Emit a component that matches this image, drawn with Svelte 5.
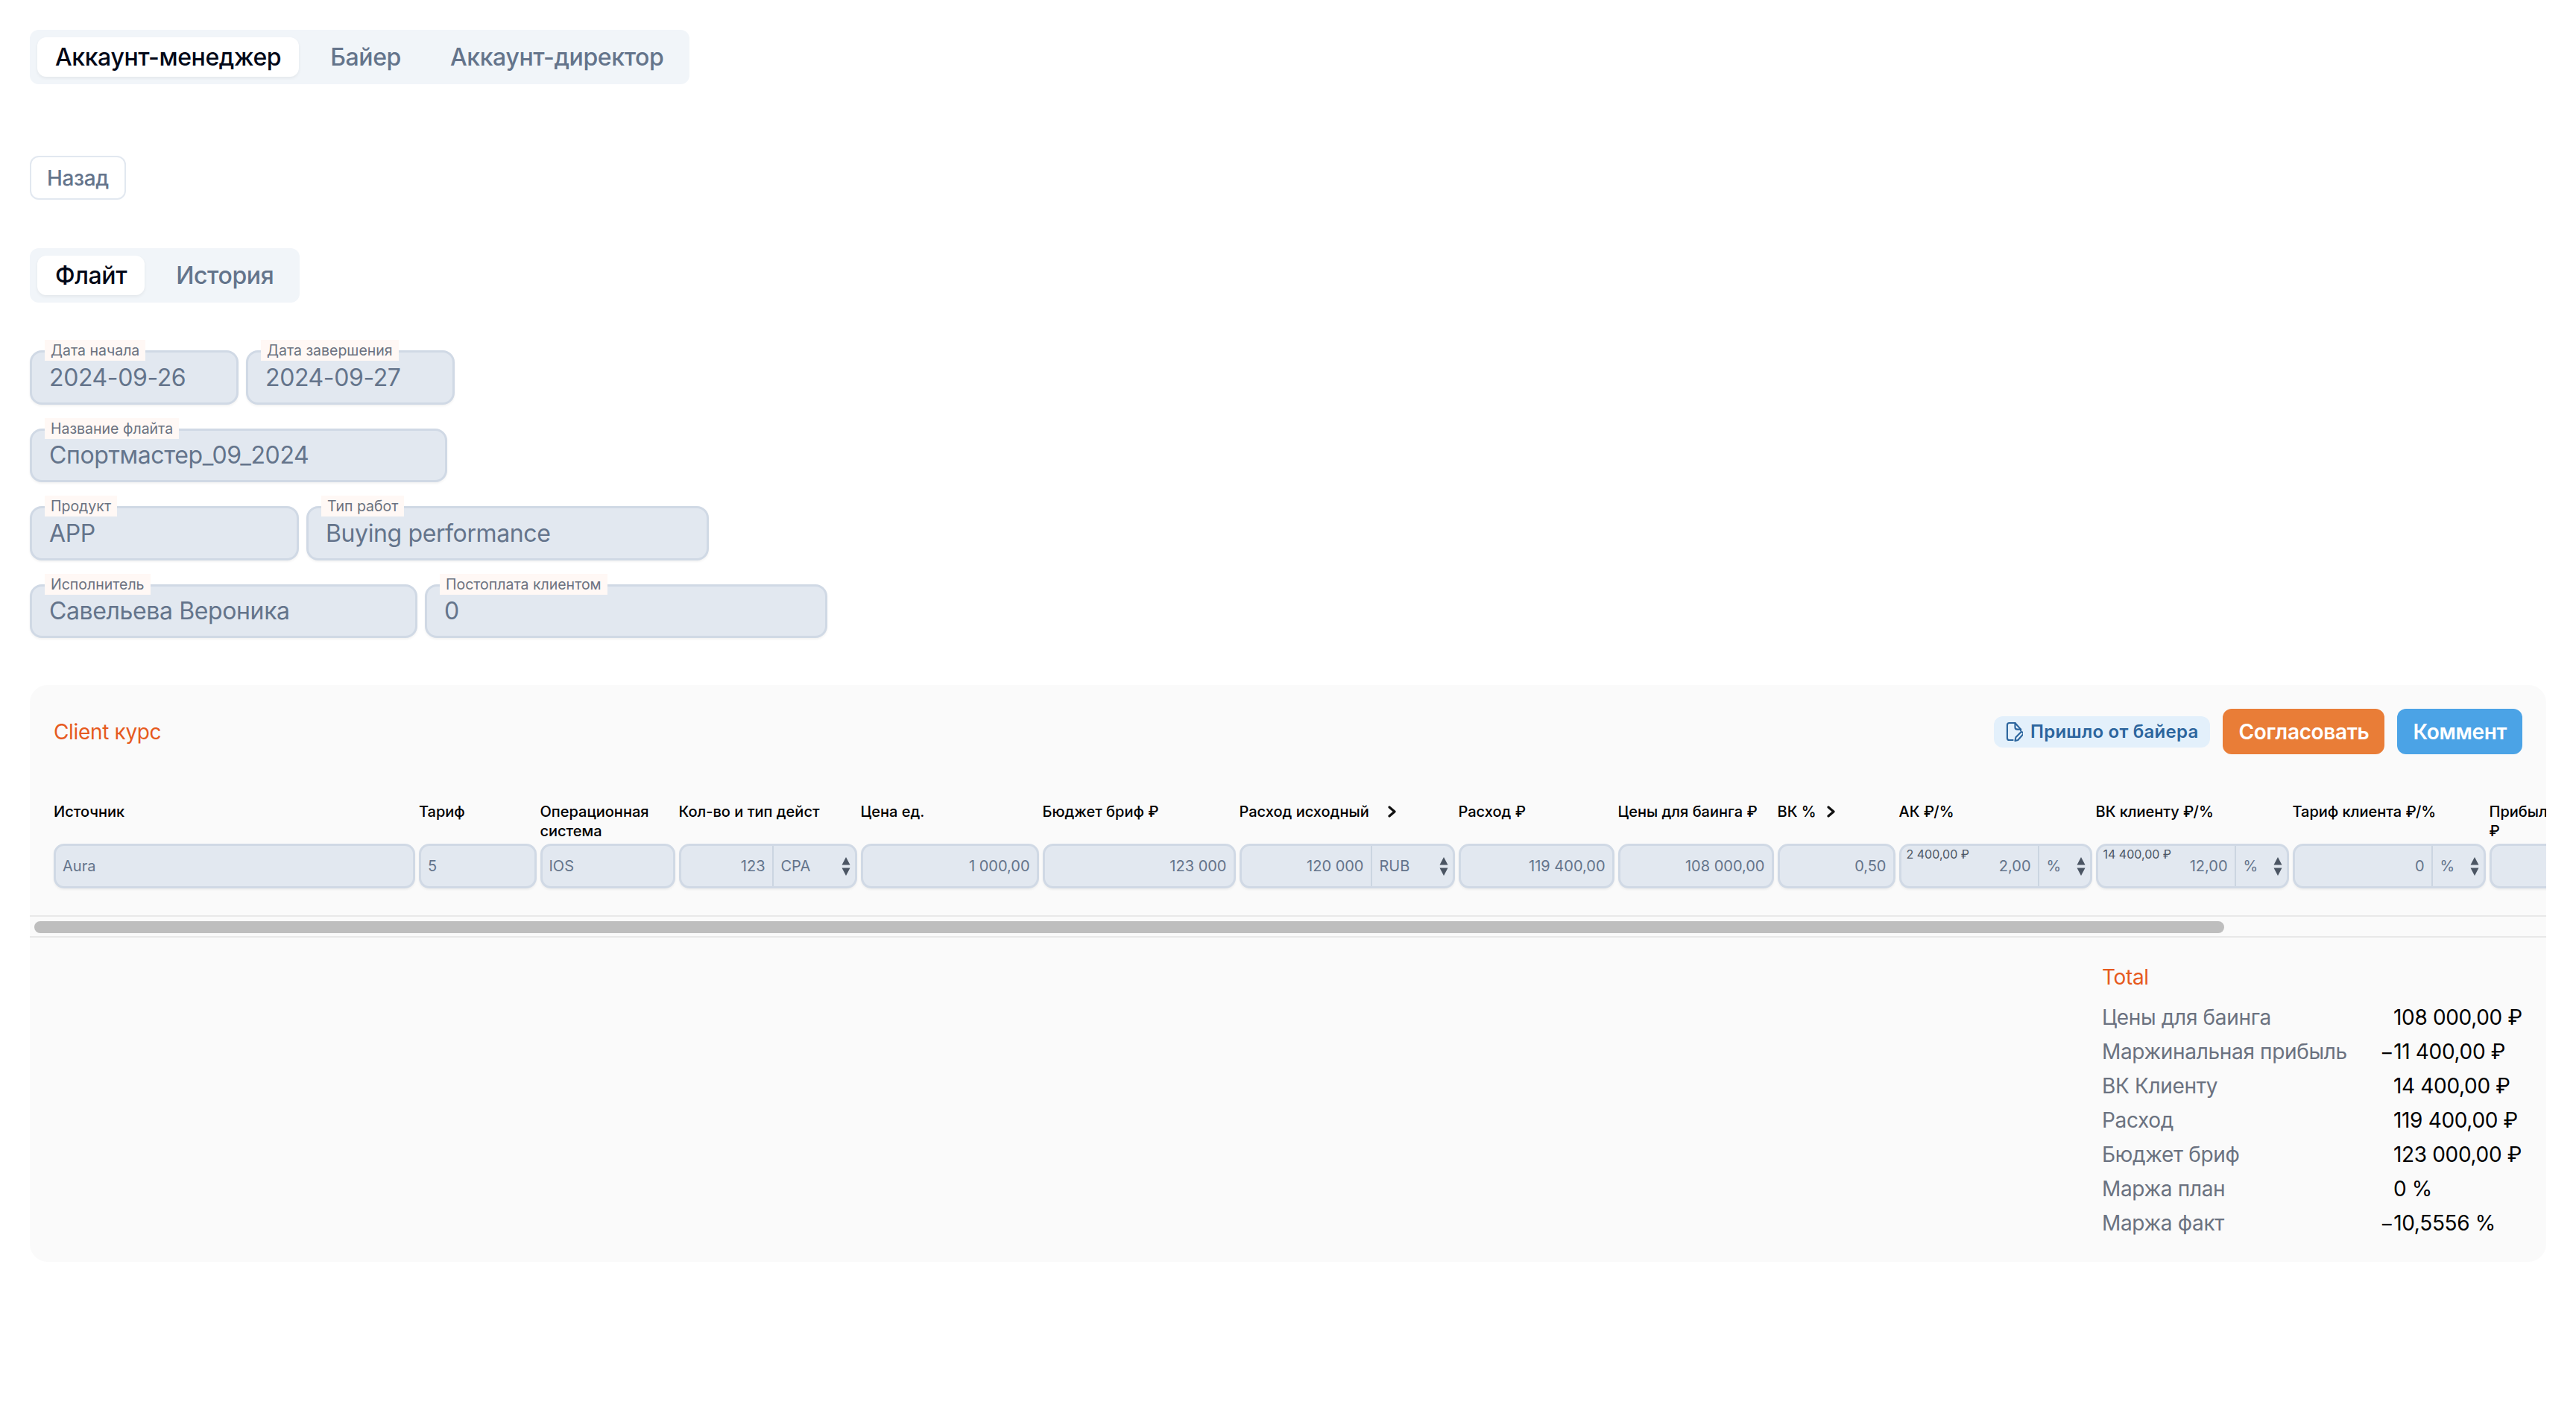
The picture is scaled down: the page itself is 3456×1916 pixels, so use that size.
<script>
  const formRows = [
    [
      { label: "Дата начала", value: "2024-09-26", width: 280 },
      { label: "Дата завершения", value: "2024-09-27", width: 280 },
    ],
    [{ label: "Название флайта", value: "Спортмастер_09_2024", width: 560 }],
    [
      { label: "Продукт", value: "APP", width: 361 },
      { label: "Тип работ", value: "Buying performance", width: 540 },
    ],
    [
      { label: "Исполнитель", value: "Савельева Вероника", width: 520 },
      { label: "Постоплата клиентом", value: "0", width: 540 },
    ],
  ];

  const columns = [
    { title: "Источник", width: 485, value: "Aura", left: true },
    { title: "Тариф", width: 157.5, value: "5", left: true },
    { title: "Операционная система", width: 181, value: "IOS", left: true },
    { title: "Кол-во и тип дейст", width: 239, value: "123", unit: "CPA", unitWidth: 111 },
    { title: "Цена ед.", width: 239, value: "1 000,00" },
    { title: "Бюджет бриф ₽", width: 259, value: "123 000" },
    { title: "Расход исходный", width: 289, value: "120 000", unit: "RUB", unitWidth: 110, chevron: 25 },
    { title: "Расход ₽", width: 209, value: "119 400,00" },
    { title: "Цены для баинга ₽", width: 209, value: "108 000,00" },
    { title: "ВК %", width: 158, value: "0,50", chevron: 14 },
    { title: "АК ₽/%", width: 259, value: "2,00", unit: "%", unitWidth: 70, hint: "2 400,00 ₽" },
    { title: "ВК клиенту ₽/%", width: 259, value: "12,00", unit: "%", unitWidth: 70, hint: "14 400,00 ₽" },
    { title: "Тариф клиента ₽/%", width: 259, value: "0", unit: "%", unitWidth: 70 },
    { title: "Прибыль ₽", width: 240, value: "-11 400,00", narrow: true },
  ];

  const totals = [
    ["Цены для баинга", "108 000,00 ₽"],
    ["Маржинальная прибыль", "−11 400,00 ₽"],
    ["ВК Клиенту", "14 400,00 ₽"],
    ["Расход", "119 400,00 ₽"],
    ["Бюджет бриф", "123 000,00 ₽"],
    ["Маржа план", "0 %"],
    ["Маржа факт", "−10,5556 %"],
  ];

  const gridTemplate = columns.map((c) => c.width + "px").join(" ");
</script>

<main>
  <div class="tabs">
    <div class="tab active">Аккаунт-менеджер</div>
    <div class="tab">Байер</div>
    <div class="tab">Аккаунт-директор</div>
  </div>

  <button class="back">Назад</button>

  <div class="tabs">
    <div class="tab active">Флайт</div>
    <div class="tab">История</div>
  </div>

  <form class="form">
    {#each formRows as row}
      <div class="form-row">
        {#each row as field}
          <div class="field" style="width: {field.width}px">
            <span class="field-label">{field.label}</span>
            {field.value}
          </div>
        {/each}
      </div>
    {/each}
  </form>

  <section class="panel">
    <header class="panel-head">
      <h2>Client курс</h2>
      <div class="actions">
        <span class="chip">
          <svg width="23" height="27" viewBox="0 0 24 28" fill="none" stroke="currentColor" stroke-width="2.2" stroke-linecap="round" stroke-linejoin="round">
            <path d="M10 26H5a3 3 0 0 1-3-3V5a3 3 0 0 1 3-3h8l8 9v2" />
            <path d="M13 2v6a3 3 0 0 0 3 3h5" />
            <path d="M13 27l1-5 7-7a2.2 2.2 0 0 1 3 3l-7 8z" />
          </svg>
          Пришло от байера
        </span>
        <button class="btn orange">Согласовать</button>
        <button class="btn blue">Коммент</button>
      </div>
    </header>

    <div class="table-wrap">
      <div class="table" style="grid-template-columns: {gridTemplate}">
        {#each columns as col}
          <div class="th" class:narrow={col.narrow}>
            <span>{col.title}</span>
            {#if col.chevron}
              <svg class="chevron" style="margin-left: {col.chevron}px" width="11" height="16" viewBox="0 0 11 16" fill="none" stroke="#111" stroke-width="3.200" stroke-linecap="round" stroke-linejoin="round">
                <path d="M2 2l7 6-7 6" />
              </svg>
            {/if}
          </div>
        {/each}
        {#each columns as col}
          <div class="cell">
            {#if col.hint}<span class="hint">{col.hint}</span>{/if}
            <div class="cell-value" class:left={col.left}>{col.value}</div>
            {#if col.unit}
              <div class="cell-unit" style="width: {col.unitWidth}px">
                {col.unit}
                <svg class="spin" width="12" height="25" viewBox="0 0 12 25" fill="#4b5563">
                  <path d="M6 0l5.500 10.500H.5zM6 25L.5 14.500h11z" />
                </svg>
              </div>
            {/if}
          </div>
        {/each}
      </div>
    </div>

    <div class="scrollbar"><div class="thumb"></div></div>

    <div class="summary">
      <div class="totals">
        <h2>Total</h2>
        <dl>
          {#each totals as [name, amount]}
            <dt>{name}</dt>
            <dd class:minus={amount.startsWith("−")}>{amount}</dd>
          {/each}
        </dl>
      </div>
    </div>
  </section>
</main>

<style>
  :global(body) {
    margin: 0;
    background: #fff;
    font-family: Inter, "Noto Sans", sans-serif;
  }

  main {
    padding: 40px;
    display: flex;
    flex-direction: column;
    align-items: flex-start;
  }

  .tabs {
    display: inline-flex;
    align-items: center;
    gap: 18px;
    height: 73px;
    box-sizing: border-box;
    padding: 0 11px 0 10px;
    background: #f1f5f9;
    border-radius: 12px;
  }

  .tab {
    padding: 0 24px;
    height: 53px;
    display: flex;
    align-items: center;
    font-size: 32px;
    font-weight: 500;
    letter-spacing: -0.012em;
    color: #64748b;
    border-radius: 12px;
  }

  .tab.active {
    background: #fff;
    color: #020817;
    box-shadow: 0 2px 4px rgba(0, 0, 0, 0.06);
  }

  .back {
    margin: 96px 0 65px;
    height: 59px;
    padding: 0 21px;
    background: #fff;
    border: 2px solid #e2e8f0;
    border-radius: 12px;
    font: 500 28px Inter, sans-serif;
    letter-spacing: -0.012em;
    color: #64748b;
  }

  .form {
    margin-top: 64px;
    display: flex;
    flex-direction: column;
    gap: 32px;
  }

  .form-row {
    display: flex;
    gap: 10px;
  }

  .field {
    position: relative;
    height: 72.5px;
    box-sizing: border-box;
    display: flex;
    align-items: center;
    padding-left: 23px;
    background: #e2e8f0;
    border: 3px solid #d0d9e5;
    border-radius: 16px;
    font-size: 32px;
    letter-spacing: -0.012em;
    color: #64748b;
    box-shadow: 0 2px 3px rgba(0, 0, 0, 0.05);
  }

  .field-label {
    position: absolute;
    left: 17px;
    top: -17px;
    height: 28px;
    line-height: 28px;
    padding: 0 8px;
    background: #fff8f5;
    font-size: 19.500px;
    letter-spacing: 0;
    color: #6b7280;
  }

  .panel {
    margin-top: 63px;
    width: 3376px;
    height: 774px;
    background: #fafafa;
    border-radius: 24px;
    overflow: hidden;
  }

  .panel-head {
    display: flex;
    justify-content: space-between;
    align-items: center;
    padding: 32px 32px 0;
    height: 61px;
  }

  h2 {
    margin: 0;
    font-size: 28px;
    font-weight: 400;
    letter-spacing: -0.012em;
    color: #e65a1e;
  }

  .actions {
    display: flex;
    align-items: center;
    gap: 17px;
  }

  .chip {
    display: flex;
    align-items: center;
    gap: 10px;
    height: 42px;
    padding: 0 16px;
    background: #e3f0fb;
    border-radius: 12px;
    font-size: 24px;
    font-weight: 600;
    letter-spacing: 0.01em;
    color: #2c659d;
  }

  .btn {
    height: 61px;
    padding: 0 21px;
    border: none;
    border-radius: 12px;
    font: 600 28px Inter, sans-serif;
    letter-spacing: -0.012em;
    color: #fff;
  }

  .orange {
    background: #e97d37;
  }

  .blue {
    background: #4ba3e6;
  }

  .table-wrap {
    margin-top: 65px;
    padding: 0 0 36px 32px;
    overflow: hidden;
  }

  .table {
    display: grid;
    column-gap: 5px;
    row-gap: 3px;
  }

  .th {
    display: flex;
    align-items: flex-start;
    font-size: 20px;
    font-weight: 500;
    line-height: 26px;
    min-height: 52px;
    margin-top: -1px;
    margin-bottom: 1px;
    color: #000;
  }

  .th.narrow span {
    max-width: 90px;
  }

  .chevron {
    margin-top: 5px;
    flex: none;
  }

  .cell {
    position: relative;
    display: flex;
    height: 60px;
    box-sizing: border-box;
    background: #e2e8f0;
    border: 3px solid #d0d9e5;
    border-radius: 14px;
    font-size: 20px;
    color: #64748b;
    box-shadow: 0 2px 3px rgba(0, 0, 0, 0.05);
  }

  .cell-value {
    flex: 1;
    display: flex;
    align-items: center;
    justify-content: flex-end;
    padding: 0 9px;
    white-space: nowrap;
  }

  .cell-value.left {
    justify-content: flex-start;
  }

  .cell-unit {
    position: relative;
    flex: none;
    box-sizing: border-box;
    display: flex;
    align-items: center;
    padding-left: 10px;
    border-left: 2px solid #cbd5e1;
  }

  .spin {
    position: absolute;
    right: 6px;
    top: 15px;
  }

  .hint {
    position: absolute;
    left: 7px;
    top: 1px;
    font-size: 16px;
    line-height: 20px;
    color: #4b5563;
  }

  .scrollbar {
    height: 30px;
    box-sizing: border-box;
    padding: 6px 6px;
    background: #fafafa;
    border-top: 2px solid #e8e8e8;
    border-bottom: 2px solid #e8e8e8;
  }

  .thumb {
    width: 2938px;
    height: 16px;
    background: #bebebe;
    border-radius: 8px;
  }

  .summary {
    display: flex;
    justify-content: flex-end;
    padding: 33px 31px 0 0;
  }

  .totals h2 {
    line-height: 40px;
  }

  dl {
    margin: 11px 0 0;
    display: grid;
    grid-template-columns: 375px 190px;
    grid-auto-rows: 46px;
    font-size: 28px;
    line-height: 46px;
    letter-spacing: -0.012em;
  }

  dt {
    color: #6b7280;
  }

  dd {
    margin: 0;
    padding-left: 16px;
    color: #000;
    white-space: nowrap;
  }

  dd.minus {
    padding-left: 0;
    margin-left: -2px;
  }
</style>
